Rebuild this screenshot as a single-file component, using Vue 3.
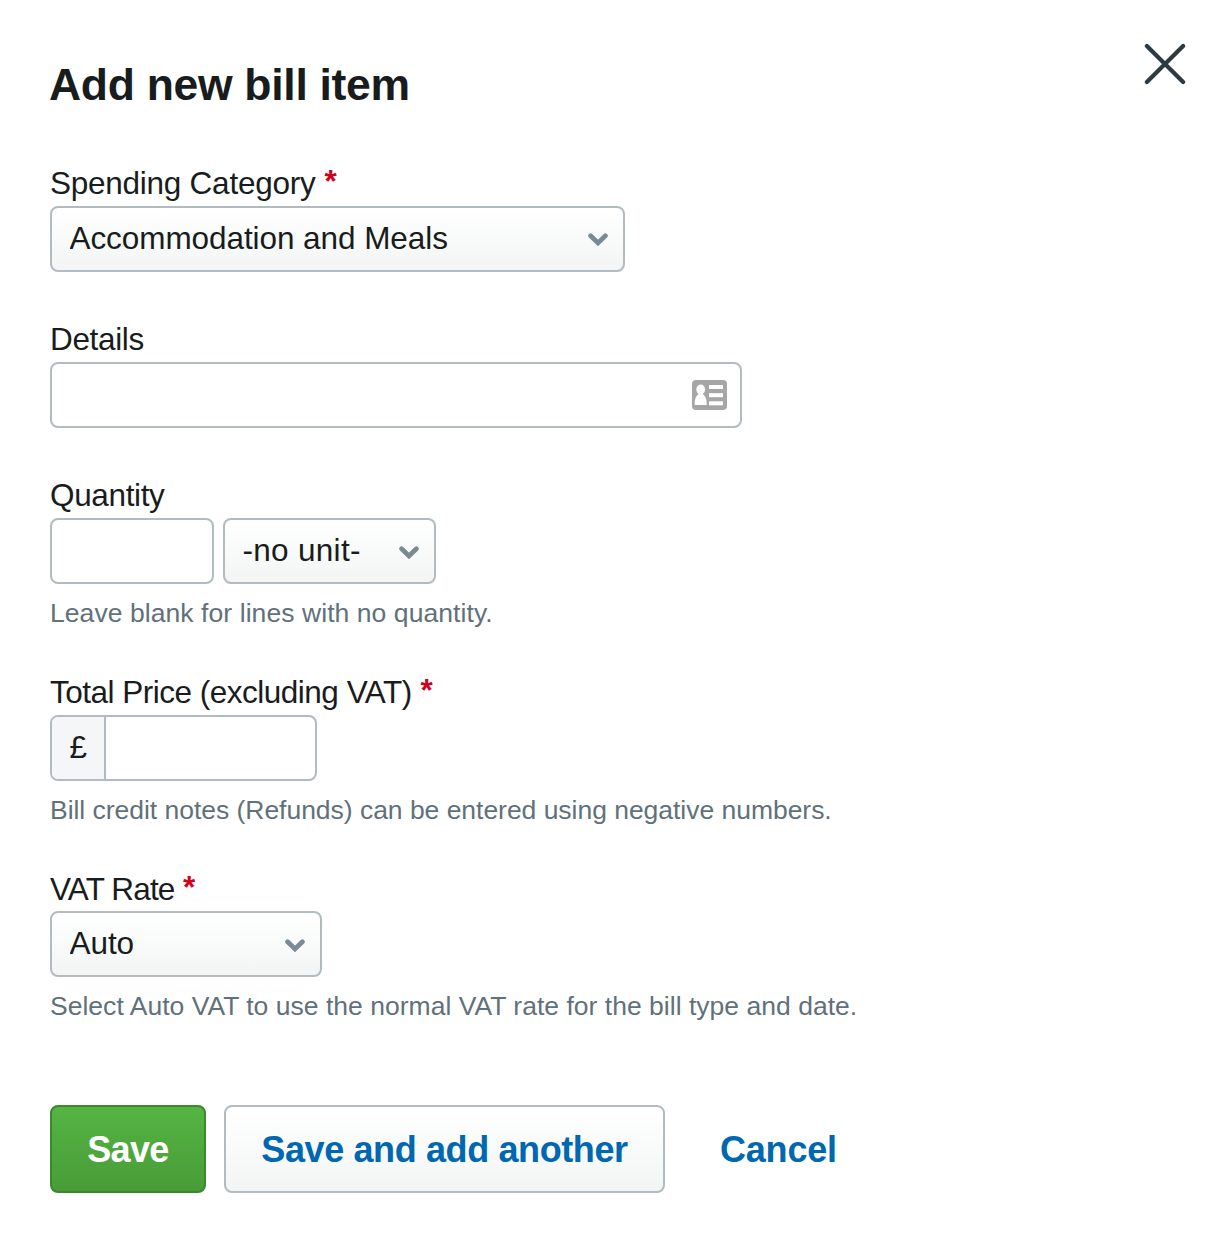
<script setup>
import { ref } from 'vue'

const category = ref('Accommodation and Meals')
const details = ref('')
const quantity = ref('')
const unit = ref('-no unit-')
const price = ref('')
const rate = ref('Auto')
</script>

<template>
  <main class="dialog">
    <header class="head">
      <h1>Add new bill item</h1>
      <button class="close" type="button" aria-label="Close">
        <svg width="42" height="42" viewBox="0 0 42 42"><path d="M2.9 2.9L39.1 39.1M39.1 2.9L2.9 39.1" /></svg>
      </button>
    </header>

    <section class="field">
      <label class="label" for="category">Spending Category <b>*</b></label>
      <div class="select category">
        <select id="category" v-model="category"><option>Accommodation and Meals</option></select>
        <svg class="chevron" width="20" height="13" viewBox="0 0 20 13"><path d="M2.6 2.8L10 9.9L17.4 2.8" /></svg>
      </div>
    </section>

    <section class="field">
      <label class="label tight" for="details">Details</label>
      <div class="input details">
        <input id="details" v-model="details" type="text">
        <svg class="card" width="35" height="30" viewBox="0 0 35 30">
          <rect width="35" height="30" rx="4" fill="#a6a6a6" />
          <g fill="#fff">
            <ellipse cx="8.7" cy="9.5" rx="4.4" ry="4.9" />
            <path d="M6.6 12H10.8V14.3C13.4 15.6 14.8 19 14.8 25H2.6C2.6 19 4 15.6 6.6 14.3Z" />
            <rect x="17" y="5" width="14" height="4" />
            <rect x="17" y="13.2" width="14" height="4" />
            <rect x="17" y="21.3" width="14" height="4" />
          </g>
        </svg>
      </div>
    </section>

    <section class="field">
      <label class="label tight" for="quantity">Quantity</label>
      <div class="row">
        <div class="input quantity"><input id="quantity" v-model="quantity" type="text"></div>
        <div class="select unit">
          <select v-model="unit" aria-label="Unit"><option>-no unit-</option></select>
          <svg class="chevron" width="20" height="13" viewBox="0 0 20 13"><path d="M2.6 2.8L10 9.9L17.4 2.8" /></svg>
        </div>
      </div>
      <p class="hint quantity-hint">Leave blank for lines with no quantity.</p>
    </section>

    <section class="field">
      <label class="label price-label" for="price">Total Price (excluding VAT) <b>*</b></label>
      <div class="input price">
        <span class="currency">£</span>
        <input id="price" v-model="price" type="text">
      </div>
      <p class="hint">Bill credit notes (Refunds) can be entered using negative numbers.</p>
    </section>

    <section class="field rate-field">
      <label class="label rate-label" for="rate">VAT Rate <b>*</b></label>
      <div class="select rate">
        <select id="rate" v-model="rate"><option>Auto</option></select>
        <svg class="chevron" width="20" height="13" viewBox="0 0 20 13"><path d="M2.6 2.8L10 9.9L17.4 2.8" /></svg>
      </div>
      <p class="hint rate-hint">Select Auto VAT to use the normal VAT rate for the bill type and date.</p>
    </section>

    <footer class="actions">
      <button class="btn primary" type="button">Save</button>
      <button class="btn secondary" type="button">Save and add another</button>
      <button class="btn link" type="button">Cancel</button>
    </footer>
  </main>
</template>

<style>
body {
  margin: 0;
  background: #fff;
}
</style>

<style scoped>
.dialog,
.dialog * {
  box-sizing: border-box;
}
.dialog {
  width: 1226px;
  height: 1244px;
  padding: 43px 40px 0 50px;
  background: #fff;
  color: #181c1d;
  font-family: "Liberation Sans", Arial, sans-serif;
  font-size: 31.5px;
}
input,
select,
button {
  font: inherit;
  color: inherit;
  margin: 0;
  padding: 0;
  border: 0;
  background: none;
  outline: none;
}
.head {
  display: flex;
  justify-content: space-between;
  align-items: flex-start;
  height: 119px;
}
h1 {
  margin: 17px 0 0 -1px;
  font-size: 44.5px;
  line-height: 50px;
  font-weight: 700;
  letter-spacing: -0.3px;
}
.close {
  width: 42px;
  height: 42px;
}
.close svg {
  display: block;
}
.close path {
  fill: none;
  stroke: #2c3a41;
  stroke-width: 4.2;
  stroke-linecap: round;
}
.field {
  margin-bottom: 46px;
}
.label {
  display: block;
  height: 44px;
  line-height: 42px;
  letter-spacing: -0.25px;
  white-space: nowrap;
}
.label b {
  position: relative;
  top: -2px;
  left: 0.5px;
  color: #d0021b;
  letter-spacing: 0;
}
.tight {
  letter-spacing: -0.35px;
}
.price-label {
  letter-spacing: -0.5px;
}
.rate-label {
  height: 43px;
  letter-spacing: -0.85px;
}
.row {
  display: flex;
  gap: 9px;
}
.input,
.select {
  position: relative;
  display: flex;
  height: 66px;
  border: 2px solid #b1bbc0;
  border-radius: 8px;
  overflow: hidden;
}
.input {
  background: #fff;
}
.input input {
  flex: 1;
  min-width: 0;
  padding: 0 18px;
}
.select {
  background: linear-gradient(#fff, #f3f5f5);
}
.select select {
  appearance: none;
  width: 100%;
  height: 59px;
  padding-left: 17.5px;
  letter-spacing: -0.07px;
}
.chevron {
  position: absolute;
  right: 15.5px;
  top: 26px;
  pointer-events: none;
}
.chevron path {
  fill: none;
  stroke: #7b8b94;
  stroke-width: 4.8;
  stroke-linecap: round;
}
.category {
  width: 575px;
}
.category .chevron {
  top: 25px;
}
.details {
  width: 692px;
}
.card {
  position: absolute;
  right: 13px;
  top: 16px;
}
.quantity {
  width: 164px;
}
.unit {
  width: 213px;
}
.unit select {
  letter-spacing: 0.3px;
}
.price {
  width: 267px;
}
.currency {
  width: 54px;
  padding-left: 17.5px;
  line-height: 60px;
  border-right: 2px solid #b1bbc0;
  background: #f4f6f8;
}
.rate {
  width: 272px;
}
.hint {
  height: 45px;
  margin: 0 0 -4px;
  padding-top: 13px;
  font-size: 26.5px;
  line-height: 32px;
  color: #5f717b;
  white-space: nowrap;
  letter-spacing: -0.03px;
}
.quantity-hint {
  letter-spacing: 0.07px;
}
.rate-hint {
  letter-spacing: 0.02px;
}
.rate-field {
  margin-bottom: 87px;
}
.actions {
  display: flex;
}
.btn {
  height: 88px;
  padding-top: 1px;
  font-size: 36px;
  font-weight: 700;
  border-radius: 8px;
  white-space: nowrap;
}
.primary {
  width: 156px;
  border: 2px solid #3c882f;
  background: linear-gradient(#55b443, #489c38);
  color: #fff;
  letter-spacing: -0.65px;
}
.secondary {
  width: 441px;
  margin-left: 18px;
  border: 2px solid #b1bbc0;
  background: linear-gradient(#fff, #f3f5f5);
  color: #0067b1;
  letter-spacing: -0.38px;
}
.link {
  margin-left: 55px;
  color: #0067b1;
  letter-spacing: -0.2px;
}
</style>
